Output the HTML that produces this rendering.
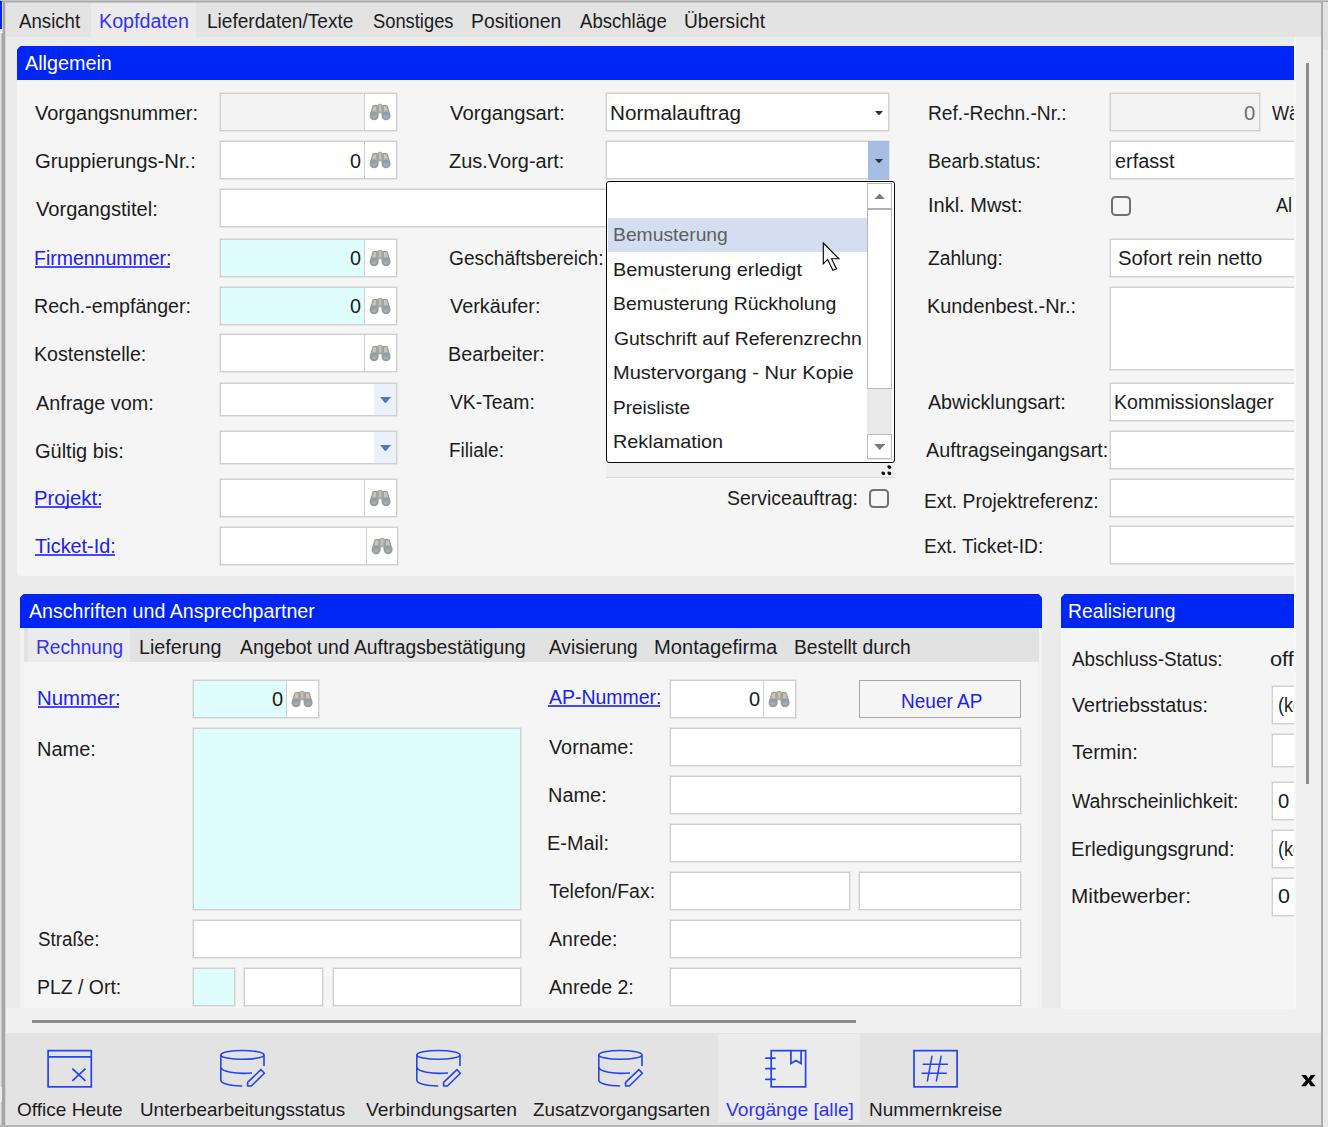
<!DOCTYPE html>
<html><head><meta charset="utf-8"><title>Vorgang</title>
<style>
html,body{margin:0;padding:0;overflow:hidden;}
body{width:1328px;height:1127px;overflow:hidden;position:relative;background:#ebebeb;font-family:"Liberation Sans",sans-serif;}
div,span,svg{position:absolute;box-sizing:border-box;}
span{white-space:pre;line-height:1;transform-origin:0 0;display:block;}
</style></head><body>
<div style="left:0px;top:0px;width:1328px;height:1127px;background:#ebebeb;"></div>
<div style="left:5px;top:2px;width:1316px;height:35px;background:#e3e3e3;"></div>
<div style="left:91px;top:2px;width:105px;height:35px;background:#ebebeb;"></div>
<div style="left:1294px;top:37px;width:2px;height:971px;background:#f8f8f8;"></div>
<div style="left:1296px;top:37px;width:25px;height:996px;background:#f0f0f0;"></div>
<div style="left:5px;top:1008px;width:1316px;height:25px;background:#f0f0f0;"></div>
<div style="left:5px;top:1033px;width:1316px;height:93px;background:#e3e3e3;"></div>
<div style="left:718px;top:1034px;width:142px;height:88px;background:#ebebeb;"></div>
<div style="left:1306px;top:63px;width:3px;height:721px;background:#8c8c8c;"></div>
<div style="left:32px;top:1020px;width:824px;height:3px;background:#8c8c8c;"></div>
<div style="left:17px;top:46px;width:1277px;height:35px;background:#0026f5;clip-path:polygon(3.5px 0,100% 0,100% 100%,0 100%,0 3.5px);"></div>
<div style="left:17px;top:80px;width:1277px;height:496px;background:#f5f5f5;border-radius:0 0 0 4px;"></div>
<div style="left:20px;top:594px;width:1022px;height:35px;background:#0026f5;clip-path:polygon(3.5px 0,calc(100% - 3.5px) 0,100% 3.5px,100% 100%,0 100%,0 3.5px);"></div>
<div style="left:20px;top:628px;width:1022px;height:380px;background:#f2f2f2;"></div>
<div style="left:24px;top:628px;width:1015px;height:35px;background:#e2e2e2;"></div>
<div style="left:28px;top:628px;width:102px;height:35px;background:#ebebeb;"></div>
<div style="left:24px;top:662px;width:1014px;height:346px;background:#f5f5f5;"></div>
<div style="left:1061px;top:594px;width:233px;height:35px;background:#0026f5;clip-path:polygon(3.5px 0,100% 0,100% 100%,0 100%,0 3.5px);"></div>
<div style="left:1061px;top:628px;width:233px;height:381px;background:#f5f5f5;"></div>
<div style="left:0px;top:0px;width:1328px;height:1px;background:#c4c4c4;"></div>
<div style="left:0px;top:1px;width:1328px;height:1px;background:#a9a9a9;"></div>
<div style="left:0px;top:2px;width:1328px;height:1px;background:#c9c9c9;"></div>
<div style="left:0px;top:2px;width:1px;height:1125px;background:#e2e2e2;"></div>
<div style="left:1px;top:2px;width:1px;height:1125px;background:#c4c4c4;"></div>
<div style="left:2px;top:2px;width:3px;height:1125px;background:#a7a7a7;"></div>
<div style="left:2px;top:2px;width:1px;height:31px;background:#d6d6d6;"></div>
<div style="left:5px;top:2px;width:1px;height:1125px;background:#d4d4d4;"></div>
<div style="left:0px;top:1087px;width:2px;height:15px;background:#ececec;"></div>
<div style="left:0px;top:1px;width:2px;height:28px;background:#0026f5;"></div>
<div style="left:0px;top:29px;width:2px;height:4px;background:#fbfbfb;"></div>
<div style="left:1321px;top:2px;width:2px;height:1125px;background:#ababab;"></div>
<div style="left:1323px;top:2px;width:5px;height:1125px;background:#e6e6e6;"></div>
<div style="left:0px;top:1125px;width:1323px;height:2px;background:#b4b4b4;"></div>
<span style="left:25.0px;top:54.0px;font-size:19.5px;color:#fff;transform:scaleX(1.0138);">Allgemein</span>
<span style="left:28.7px;top:602.0px;font-size:19.5px;color:#fff;transform:scaleX(1.0063);">Anschriften und Ansprechpartner</span>
<span style="left:1068.3px;top:602.0px;font-size:19.5px;color:#fff;transform:scaleX(0.9906);">Realisierung</span>
<span style="left:19.0px;top:12.0px;font-size:19.5px;color:#1c1c1c;transform:scaleX(0.9566);">Ansicht</span>
<span style="left:98.7px;top:12.0px;font-size:19.5px;color:#3232fa;transform:scaleX(1.0105);">Kopfdaten</span>
<span style="left:207.0px;top:12.0px;font-size:19.5px;color:#1c1c1c;transform:scaleX(0.9781);">Lieferdaten/Texte</span>
<span style="left:372.7px;top:12.0px;font-size:19.5px;color:#1c1c1c;transform:scaleX(0.9400);">Sonstiges</span>
<span style="left:471.0px;top:12.0px;font-size:19.5px;color:#1c1c1c;transform:scaleX(0.9916);">Positionen</span>
<span style="left:580.0px;top:12.0px;font-size:19.5px;color:#1c1c1c;transform:scaleX(0.9525);">Abschläge</span>
<span style="left:684.1px;top:12.0px;font-size:19.5px;color:#1c1c1c;transform:scaleX(0.9848);">Übersicht</span>
<div style="left:220px;top:93px;width:177px;height:38px;background:#fff;border:1px solid #d0d0d0;box-shadow:0 0 0 1px rgba(200,200,200,.32);"></div>
<div style="left:221px;top:94px;width:143px;height:36px;background:#f3f3f3;"></div>
<div style="left:364px;top:94px;width:1px;height:36px;background:#d0d0d0;"></div>
<svg style="left:369.1px;top:102.6px" width="22.2" height="18.35" viewBox="0 0 23 19">
<defs><linearGradient id="bl1" x1="0" y1="0" x2="0" y2="1"><stop offset="0" stop-color="#8799ab"/><stop offset="1" stop-color="#9fbdd6"/></linearGradient></defs>
<path d="M3.6 2.6 Q6.5 1.2 9.6 2.2 L10.2 12 L0.9 12 Z" fill="#a0a09b"/>
<path d="M19.4 2.6 Q16.5 1.2 13.4 2.2 L12.8 12 L22.1 12 Z" fill="#a0a09b"/>
<path d="M9 1.6 Q11.5 0 14 1.6 L13.8 10.6 L9.2 10.6 Z" fill="#acaca7"/>
<path d="M4.6 3.6 L7.4 3.2 L7.6 9.5 L3.2 9.5 Z" fill="#c4c4c0"/>
<path d="M18.4 3.6 L15.6 3.2 L15.4 9.5 L19.8 9.5 Z" fill="#c4c4c0"/>
<path d="M10.4 2.2 L12.6 2.2 L12.4 8.6 L10.6 8.6 Z" fill="#c2c2be"/>
<rect x="6.2" y="2.1" width="2.4" height="1.1" fill="#c08a55" opacity=".75"/>
<rect x="15.2" y="2.1" width="2.4" height="1.1" fill="#c08a55" opacity=".75"/>
<circle cx="5.3" cy="13.2" r="4.7" fill="#9d9d97"/>
<circle cx="17.7" cy="13.2" r="4.7" fill="#9d9d97"/>
<circle cx="5.4" cy="13.1" r="2.5" fill="url(#bl1)"/>
<circle cx="17.6" cy="13.1" r="2.5" fill="url(#bl1)"/>
</svg>
<div style="left:220px;top:141px;width:177px;height:38px;background:#fff;border:1px solid #d0d0d0;box-shadow:0 0 0 1px rgba(200,200,200,.32);"></div>
<div style="left:221px;top:142px;width:143px;height:36px;background:#fff;"></div>
<div style="left:364px;top:142px;width:1px;height:36px;background:#d0d0d0;"></div>
<svg style="left:369.1px;top:150.6px" width="22.2" height="18.35" viewBox="0 0 23 19">
<defs><linearGradient id="bl2" x1="0" y1="0" x2="0" y2="1"><stop offset="0" stop-color="#8799ab"/><stop offset="1" stop-color="#9fbdd6"/></linearGradient></defs>
<path d="M3.6 2.6 Q6.5 1.2 9.6 2.2 L10.2 12 L0.9 12 Z" fill="#a0a09b"/>
<path d="M19.4 2.6 Q16.5 1.2 13.4 2.2 L12.8 12 L22.1 12 Z" fill="#a0a09b"/>
<path d="M9 1.6 Q11.5 0 14 1.6 L13.8 10.6 L9.2 10.6 Z" fill="#acaca7"/>
<path d="M4.6 3.6 L7.4 3.2 L7.6 9.5 L3.2 9.5 Z" fill="#c4c4c0"/>
<path d="M18.4 3.6 L15.6 3.2 L15.4 9.5 L19.8 9.5 Z" fill="#c4c4c0"/>
<path d="M10.4 2.2 L12.6 2.2 L12.4 8.6 L10.6 8.6 Z" fill="#c2c2be"/>
<rect x="6.2" y="2.1" width="2.4" height="1.1" fill="#c08a55" opacity=".75"/>
<rect x="15.2" y="2.1" width="2.4" height="1.1" fill="#c08a55" opacity=".75"/>
<circle cx="5.3" cy="13.2" r="4.7" fill="#9d9d97"/>
<circle cx="17.7" cy="13.2" r="4.7" fill="#9d9d97"/>
<circle cx="5.4" cy="13.1" r="2.5" fill="url(#bl2)"/>
<circle cx="17.6" cy="13.1" r="2.5" fill="url(#bl2)"/>
</svg>
<div style="left:220px;top:189px;width:400px;height:38px;background:#fff;border:1px solid #d0d0d0;box-shadow:0 0 0 1px rgba(200,200,200,.32);"></div>
<div style="left:220px;top:239px;width:177px;height:38px;background:#fff;border:1px solid #d0d0d0;box-shadow:0 0 0 1px rgba(200,200,200,.32);"></div>
<div style="left:221px;top:240px;width:143px;height:36px;background:#e0fdfd;"></div>
<div style="left:364px;top:240px;width:1px;height:36px;background:#d0d0d0;"></div>
<svg style="left:369.1px;top:248.6px" width="22.2" height="18.35" viewBox="0 0 23 19">
<defs><linearGradient id="bl3" x1="0" y1="0" x2="0" y2="1"><stop offset="0" stop-color="#8799ab"/><stop offset="1" stop-color="#9fbdd6"/></linearGradient></defs>
<path d="M3.6 2.6 Q6.5 1.2 9.6 2.2 L10.2 12 L0.9 12 Z" fill="#a0a09b"/>
<path d="M19.4 2.6 Q16.5 1.2 13.4 2.2 L12.8 12 L22.1 12 Z" fill="#a0a09b"/>
<path d="M9 1.6 Q11.5 0 14 1.6 L13.8 10.6 L9.2 10.6 Z" fill="#acaca7"/>
<path d="M4.6 3.6 L7.4 3.2 L7.6 9.5 L3.2 9.5 Z" fill="#c4c4c0"/>
<path d="M18.4 3.6 L15.6 3.2 L15.4 9.5 L19.8 9.5 Z" fill="#c4c4c0"/>
<path d="M10.4 2.2 L12.6 2.2 L12.4 8.6 L10.6 8.6 Z" fill="#c2c2be"/>
<rect x="6.2" y="2.1" width="2.4" height="1.1" fill="#c08a55" opacity=".75"/>
<rect x="15.2" y="2.1" width="2.4" height="1.1" fill="#c08a55" opacity=".75"/>
<circle cx="5.3" cy="13.2" r="4.7" fill="#9d9d97"/>
<circle cx="17.7" cy="13.2" r="4.7" fill="#9d9d97"/>
<circle cx="5.4" cy="13.1" r="2.5" fill="url(#bl3)"/>
<circle cx="17.6" cy="13.1" r="2.5" fill="url(#bl3)"/>
</svg>
<div style="left:220px;top:287px;width:177px;height:38px;background:#fff;border:1px solid #d0d0d0;box-shadow:0 0 0 1px rgba(200,200,200,.32);"></div>
<div style="left:221px;top:288px;width:143px;height:36px;background:#e0fdfd;"></div>
<div style="left:364px;top:288px;width:1px;height:36px;background:#d0d0d0;"></div>
<svg style="left:369.1px;top:296.6px" width="22.2" height="18.35" viewBox="0 0 23 19">
<defs><linearGradient id="bl4" x1="0" y1="0" x2="0" y2="1"><stop offset="0" stop-color="#8799ab"/><stop offset="1" stop-color="#9fbdd6"/></linearGradient></defs>
<path d="M3.6 2.6 Q6.5 1.2 9.6 2.2 L10.2 12 L0.9 12 Z" fill="#a0a09b"/>
<path d="M19.4 2.6 Q16.5 1.2 13.4 2.2 L12.8 12 L22.1 12 Z" fill="#a0a09b"/>
<path d="M9 1.6 Q11.5 0 14 1.6 L13.8 10.6 L9.2 10.6 Z" fill="#acaca7"/>
<path d="M4.6 3.6 L7.4 3.2 L7.6 9.5 L3.2 9.5 Z" fill="#c4c4c0"/>
<path d="M18.4 3.6 L15.6 3.2 L15.4 9.5 L19.8 9.5 Z" fill="#c4c4c0"/>
<path d="M10.4 2.2 L12.6 2.2 L12.4 8.6 L10.6 8.6 Z" fill="#c2c2be"/>
<rect x="6.2" y="2.1" width="2.4" height="1.1" fill="#c08a55" opacity=".75"/>
<rect x="15.2" y="2.1" width="2.4" height="1.1" fill="#c08a55" opacity=".75"/>
<circle cx="5.3" cy="13.2" r="4.7" fill="#9d9d97"/>
<circle cx="17.7" cy="13.2" r="4.7" fill="#9d9d97"/>
<circle cx="5.4" cy="13.1" r="2.5" fill="url(#bl4)"/>
<circle cx="17.6" cy="13.1" r="2.5" fill="url(#bl4)"/>
</svg>
<div style="left:220px;top:334px;width:177px;height:38px;background:#fff;border:1px solid #d0d0d0;box-shadow:0 0 0 1px rgba(200,200,200,.32);"></div>
<div style="left:221px;top:335px;width:143px;height:36px;background:#fff;"></div>
<div style="left:364px;top:335px;width:1px;height:36px;background:#d0d0d0;"></div>
<svg style="left:369.1px;top:343.6px" width="22.2" height="18.35" viewBox="0 0 23 19">
<defs><linearGradient id="bl5" x1="0" y1="0" x2="0" y2="1"><stop offset="0" stop-color="#8799ab"/><stop offset="1" stop-color="#9fbdd6"/></linearGradient></defs>
<path d="M3.6 2.6 Q6.5 1.2 9.6 2.2 L10.2 12 L0.9 12 Z" fill="#a0a09b"/>
<path d="M19.4 2.6 Q16.5 1.2 13.4 2.2 L12.8 12 L22.1 12 Z" fill="#a0a09b"/>
<path d="M9 1.6 Q11.5 0 14 1.6 L13.8 10.6 L9.2 10.6 Z" fill="#acaca7"/>
<path d="M4.6 3.6 L7.4 3.2 L7.6 9.5 L3.2 9.5 Z" fill="#c4c4c0"/>
<path d="M18.4 3.6 L15.6 3.2 L15.4 9.5 L19.8 9.5 Z" fill="#c4c4c0"/>
<path d="M10.4 2.2 L12.6 2.2 L12.4 8.6 L10.6 8.6 Z" fill="#c2c2be"/>
<rect x="6.2" y="2.1" width="2.4" height="1.1" fill="#c08a55" opacity=".75"/>
<rect x="15.2" y="2.1" width="2.4" height="1.1" fill="#c08a55" opacity=".75"/>
<circle cx="5.3" cy="13.2" r="4.7" fill="#9d9d97"/>
<circle cx="17.7" cy="13.2" r="4.7" fill="#9d9d97"/>
<circle cx="5.4" cy="13.1" r="2.5" fill="url(#bl5)"/>
<circle cx="17.6" cy="13.1" r="2.5" fill="url(#bl5)"/>
</svg>
<div style="left:220px;top:383px;width:177px;height:33px;background:#fff;border:1px solid #d0d0d0;box-shadow:0 0 0 1px rgba(200,200,200,.32);"></div>
<div style="left:374px;top:384px;width:22px;height:31px;background:#eaf1fb;"></div>
<svg style="left:380.1px;top:396.9px" width="11" height="6.6" viewBox="0 0 11 6.6"><path d="M0 0 L11 0 L5.5 6.6 Z" fill="#4f7cb8"/></svg>
<div style="left:220px;top:431px;width:177px;height:33px;background:#fff;border:1px solid #d0d0d0;box-shadow:0 0 0 1px rgba(200,200,200,.32);"></div>
<div style="left:374px;top:432px;width:22px;height:31px;background:#eaf1fb;"></div>
<svg style="left:380.1px;top:444.9px" width="11" height="6.6" viewBox="0 0 11 6.6"><path d="M0 0 L11 0 L5.5 6.6 Z" fill="#4f7cb8"/></svg>
<div style="left:220px;top:479px;width:177px;height:38px;background:#fff;border:1px solid #d0d0d0;box-shadow:0 0 0 1px rgba(200,200,200,.32);"></div>
<div style="left:221px;top:480px;width:143px;height:36px;background:#fff;"></div>
<div style="left:364px;top:480px;width:1px;height:36px;background:#d0d0d0;"></div>
<svg style="left:369.1px;top:488.6px" width="22.2" height="18.35" viewBox="0 0 23 19">
<defs><linearGradient id="bl6" x1="0" y1="0" x2="0" y2="1"><stop offset="0" stop-color="#8799ab"/><stop offset="1" stop-color="#9fbdd6"/></linearGradient></defs>
<path d="M3.6 2.6 Q6.5 1.2 9.6 2.2 L10.2 12 L0.9 12 Z" fill="#a0a09b"/>
<path d="M19.4 2.6 Q16.5 1.2 13.4 2.2 L12.8 12 L22.1 12 Z" fill="#a0a09b"/>
<path d="M9 1.6 Q11.5 0 14 1.6 L13.8 10.6 L9.2 10.6 Z" fill="#acaca7"/>
<path d="M4.6 3.6 L7.4 3.2 L7.6 9.5 L3.2 9.5 Z" fill="#c4c4c0"/>
<path d="M18.4 3.6 L15.6 3.2 L15.4 9.5 L19.8 9.5 Z" fill="#c4c4c0"/>
<path d="M10.4 2.2 L12.6 2.2 L12.4 8.6 L10.6 8.6 Z" fill="#c2c2be"/>
<rect x="6.2" y="2.1" width="2.4" height="1.1" fill="#c08a55" opacity=".75"/>
<rect x="15.2" y="2.1" width="2.4" height="1.1" fill="#c08a55" opacity=".75"/>
<circle cx="5.3" cy="13.2" r="4.7" fill="#9d9d97"/>
<circle cx="17.7" cy="13.2" r="4.7" fill="#9d9d97"/>
<circle cx="5.4" cy="13.1" r="2.5" fill="url(#bl6)"/>
<circle cx="17.6" cy="13.1" r="2.5" fill="url(#bl6)"/>
</svg>
<div style="left:220px;top:527px;width:178px;height:38px;background:#fff;border:1px solid #d0d0d0;box-shadow:0 0 0 1px rgba(200,200,200,.32);"></div>
<div style="left:221px;top:528px;width:145px;height:36px;background:#fff;"></div>
<div style="left:366px;top:528px;width:1px;height:36px;background:#d0d0d0;"></div>
<svg style="left:370.6px;top:536.6px" width="22.2" height="18.35" viewBox="0 0 23 19">
<defs><linearGradient id="bl7" x1="0" y1="0" x2="0" y2="1"><stop offset="0" stop-color="#8799ab"/><stop offset="1" stop-color="#9fbdd6"/></linearGradient></defs>
<path d="M3.6 2.6 Q6.5 1.2 9.6 2.2 L10.2 12 L0.9 12 Z" fill="#a0a09b"/>
<path d="M19.4 2.6 Q16.5 1.2 13.4 2.2 L12.8 12 L22.1 12 Z" fill="#a0a09b"/>
<path d="M9 1.6 Q11.5 0 14 1.6 L13.8 10.6 L9.2 10.6 Z" fill="#acaca7"/>
<path d="M4.6 3.6 L7.4 3.2 L7.6 9.5 L3.2 9.5 Z" fill="#c4c4c0"/>
<path d="M18.4 3.6 L15.6 3.2 L15.4 9.5 L19.8 9.5 Z" fill="#c4c4c0"/>
<path d="M10.4 2.2 L12.6 2.2 L12.4 8.6 L10.6 8.6 Z" fill="#c2c2be"/>
<rect x="6.2" y="2.1" width="2.4" height="1.1" fill="#c08a55" opacity=".75"/>
<rect x="15.2" y="2.1" width="2.4" height="1.1" fill="#c08a55" opacity=".75"/>
<circle cx="5.3" cy="13.2" r="4.7" fill="#9d9d97"/>
<circle cx="17.7" cy="13.2" r="4.7" fill="#9d9d97"/>
<circle cx="5.4" cy="13.1" r="2.5" fill="url(#bl7)"/>
<circle cx="17.6" cy="13.1" r="2.5" fill="url(#bl7)"/>
</svg>
<span style="left:35.1px;top:104.0px;font-size:19.5px;color:#1c1c1c;transform:scaleX(1.0231);">Vorgangsnummer:</span>
<span style="left:34.8px;top:152.0px;font-size:19.5px;color:#1c1c1c;transform:scaleX(1.0375);">Gruppierungs-Nr.:</span>
<span style="left:35.7px;top:200.0px;font-size:19.5px;color:#1c1c1c;transform:scaleX(1.0308);">Vorgangstitel:</span>
<div style="left:35.4px;top:266px;width:135.0px;height:2px;background:#4a4afa;"></div>
<span style="left:34.2px;top:249.0px;font-size:19.5px;color:#2020f0;transform:scaleX(0.9988);">Firmennummer:</span>
<span style="left:34.2px;top:297.0px;font-size:19.5px;color:#1c1c1c;transform:scaleX(1.0060);">Rech.-empfänger:</span>
<span style="left:34.2px;top:345.0px;font-size:19.5px;color:#1c1c1c;transform:scaleX(1.0053);">Kostenstelle:</span>
<span style="left:35.8px;top:394.0px;font-size:19.5px;color:#1c1c1c;transform:scaleX(1.0151);">Anfrage vom:</span>
<span style="left:34.8px;top:442.0px;font-size:19.5px;color:#1c1c1c;transform:scaleX(1.0256);">Gültig bis:</span>
<div style="left:35.4px;top:506px;width:66.0px;height:2px;background:#4a4afa;"></div>
<span style="left:34.2px;top:489.0px;font-size:19.5px;color:#2020f0;transform:scaleX(1.0384);">Projekt:</span>
<div style="left:35.4px;top:554px;width:79.3px;height:2px;background:#4a4afa;"></div>
<span style="left:35.4px;top:537.0px;font-size:19.5px;color:#2020f0;transform:scaleX(1.0153);">Ticket-Id:</span>
<span style="left:349.7px;top:152.0px;font-size:19.5px;color:#1c1c1c;transform:scaleX(1.0150);">0</span>
<span style="left:349.7px;top:249.0px;font-size:19.5px;color:#1c1c1c;transform:scaleX(1.0150);">0</span>
<span style="left:349.7px;top:297.0px;font-size:19.5px;color:#1c1c1c;transform:scaleX(1.0150);">0</span>
<span style="left:449.9px;top:104.0px;font-size:19.5px;color:#1c1c1c;transform:scaleX(1.0385);">Vorgangsart:</span>
<span style="left:449.4px;top:152.0px;font-size:19.5px;color:#1c1c1c;transform:scaleX(1.0238);">Zus.Vorg-art:</span>
<span style="left:449.0px;top:249.0px;font-size:19.5px;color:#1c1c1c;transform:scaleX(0.9829);">Geschäftsbereich:</span>
<span style="left:449.9px;top:297.0px;font-size:19.5px;color:#1c1c1c;transform:scaleX(1.0176);">Verkäufer:</span>
<span style="left:448.4px;top:345.0px;font-size:19.5px;color:#1c1c1c;transform:scaleX(1.0148);">Bearbeiter:</span>
<span style="left:449.9px;top:393.0px;font-size:19.5px;color:#1c1c1c;transform:scaleX(0.9899);">VK-Team:</span>
<span style="left:448.5px;top:441.0px;font-size:19.5px;color:#1c1c1c;transform:scaleX(0.9747);">Filiale:</span>
<span style="left:726.7px;top:489.0px;font-size:19.5px;color:#1c1c1c;transform:scaleX(0.9984);">Serviceauftrag:</span>
<div style="left:869.3px;top:488.9px;width:20px;height:19px;background:#f6f6f6;border:2px solid #707070;border-radius:4.5px;"></div>
<div style="left:606px;top:93px;width:283px;height:38px;background:#fff;border:1px solid #d0d0d0;box-shadow:0 0 0 1px rgba(200,200,200,.32);"></div>
<span style="left:610.3px;top:104.0px;font-size:19.5px;color:#1c1c1c;transform:scaleX(1.0596);">Normalauftrag</span>
<svg style="left:875.0px;top:110.8px" width="8" height="4.5" viewBox="0 0 8 4.5"><path d="M0 0 L8 0 L4.0 4.5 Z" fill="#333"/></svg>
<div style="left:606px;top:141px;width:283px;height:38px;background:#fff;border:1px solid #d0d0d0;box-shadow:0 0 0 1px rgba(200,200,200,.32);"></div>
<div style="left:868px;top:141px;width:21px;height:39px;background:#a6bde6;"></div>
<svg style="left:875.0px;top:158.8px" width="8" height="4.5" viewBox="0 0 8 4.5"><path d="M0 0 L8 0 L4.0 4.5 Z" fill="#333"/></svg>
<span style="left:927.5px;top:104.0px;font-size:19.5px;color:#1c1c1c;transform:scaleX(0.9842);">Ref.-Rechn.-Nr.:</span>
<span style="left:927.5px;top:152.0px;font-size:19.5px;color:#1c1c1c;transform:scaleX(0.9817);">Bearb.status:</span>
<span style="left:928.2px;top:196.0px;font-size:19.5px;color:#1c1c1c;transform:scaleX(1.0256);">Inkl. Mwst:</span>
<span style="left:928.4px;top:249.0px;font-size:19.5px;color:#1c1c1c;transform:scaleX(0.9849);">Zahlung:</span>
<span style="left:927.4px;top:297.0px;font-size:19.5px;color:#1c1c1c;transform:scaleX(1.0186);">Kundenbest.-Nr.:</span>
<span style="left:928.4px;top:393.0px;font-size:19.5px;color:#1c1c1c;transform:scaleX(1.0086);">Abwicklungsart:</span>
<span style="left:925.8px;top:441.0px;font-size:19.5px;color:#1c1c1c;transform:scaleX(1.0127);">Auftragseingangsart:</span>
<span style="left:924.3px;top:492.0px;font-size:19.5px;color:#1c1c1c;transform:scaleX(0.9887);">Ext. Projektreferenz:</span>
<span style="left:924.3px;top:537.0px;font-size:19.5px;color:#1c1c1c;transform:scaleX(0.9824);">Ext. Ticket-ID:</span>
<div style="left:1110px;top:93px;width:150px;height:38px;background:#f3f3f3;border:1px solid #d0d0d0;box-shadow:0 0 0 1px rgba(200,200,200,.32);"></div>
<span style="left:1244.0px;top:104.0px;font-size:19.5px;color:#6e6e6e;transform:scaleX(1.0363);">0</span>
<div style="left:1110px;top:141px;width:200px;height:38px;background:#fff;border:1px solid #d0d0d0;box-shadow:0 0 0 1px rgba(200,200,200,.32);"></div>
<span style="left:1115.2px;top:152.0px;font-size:19.5px;color:#1c1c1c;transform:scaleX(1.0170);">erfasst</span>
<div style="left:1110.8px;top:196.4px;width:20px;height:19.4px;background:#f6f6f6;border:2px solid #707070;border-radius:4.5px;"></div>
<div style="left:1110px;top:239px;width:200px;height:38px;background:#fff;border:1px solid #d0d0d0;box-shadow:0 0 0 1px rgba(200,200,200,.32);"></div>
<span style="left:1118.1px;top:249.0px;font-size:19.5px;color:#1c1c1c;transform:scaleX(1.0402);">Sofort rein netto</span>
<div style="left:1110px;top:287px;width:200px;height:83px;background:#fff;border:1px solid #d0d0d0;box-shadow:0 0 0 1px rgba(200,200,200,.32);"></div>
<div style="left:1110px;top:383px;width:200px;height:38px;background:#fff;border:1px solid #d0d0d0;box-shadow:0 0 0 1px rgba(200,200,200,.32);"></div>
<span style="left:1114.4px;top:393.0px;font-size:19.5px;color:#1c1c1c;transform:scaleX(1.0021);">Kommissionslager</span>
<div style="left:1110px;top:431px;width:200px;height:38px;background:#fff;border:1px solid #d0d0d0;box-shadow:0 0 0 1px rgba(200,200,200,.32);"></div>
<div style="left:1110px;top:479px;width:200px;height:38px;background:#fff;border:1px solid #d0d0d0;box-shadow:0 0 0 1px rgba(200,200,200,.32);"></div>
<div style="left:1110px;top:526px;width:200px;height:38px;background:#fff;border:1px solid #d0d0d0;box-shadow:0 0 0 1px rgba(200,200,200,.32);"></div>
<span style="left:1272.1px;top:104.0px;font-size:19.5px;color:#1c1c1c;transform:scaleX(0.9300);">Wä</span>
<span style="left:1276.4px;top:196.0px;font-size:19.5px;color:#1c1c1c;transform:scaleX(0.9300);">Al</span>
<span style="left:35.5px;top:638.0px;font-size:19.5px;color:#3232fa;transform:scaleX(0.9804);">Rechnung</span>
<span style="left:138.8px;top:638.0px;font-size:19.5px;color:#1c1c1c;transform:scaleX(1.0129);">Lieferung</span>
<span style="left:240.4px;top:638.0px;font-size:19.5px;color:#1c1c1c;transform:scaleX(0.9908);">Angebot und Auftragsbestätigung</span>
<span style="left:548.5px;top:638.0px;font-size:19.5px;color:#1c1c1c;transform:scaleX(0.9776);">Avisierung</span>
<span style="left:653.8px;top:638.0px;font-size:19.5px;color:#1c1c1c;transform:scaleX(1.0333);">Montagefirma</span>
<span style="left:793.8px;top:638.0px;font-size:19.5px;color:#1c1c1c;transform:scaleX(0.9875);">Bestellt durch</span>
<div style="left:193px;top:680px;width:126px;height:38px;background:#fff;border:1px solid #d0d0d0;box-shadow:0 0 0 1px rgba(200,200,200,.32);"></div>
<div style="left:194px;top:681px;width:92px;height:36px;background:#e0fdfd;"></div>
<div style="left:286px;top:681px;width:1px;height:36px;background:#d0d0d0;"></div>
<svg style="left:291.1px;top:689.6px" width="22.2" height="18.35" viewBox="0 0 23 19">
<defs><linearGradient id="bl8" x1="0" y1="0" x2="0" y2="1"><stop offset="0" stop-color="#8799ab"/><stop offset="1" stop-color="#9fbdd6"/></linearGradient></defs>
<path d="M3.6 2.6 Q6.5 1.2 9.6 2.2 L10.2 12 L0.9 12 Z" fill="#a0a09b"/>
<path d="M19.4 2.6 Q16.5 1.2 13.4 2.2 L12.8 12 L22.1 12 Z" fill="#a0a09b"/>
<path d="M9 1.6 Q11.5 0 14 1.6 L13.8 10.6 L9.2 10.6 Z" fill="#acaca7"/>
<path d="M4.6 3.6 L7.4 3.2 L7.6 9.5 L3.2 9.5 Z" fill="#c4c4c0"/>
<path d="M18.4 3.6 L15.6 3.2 L15.4 9.5 L19.8 9.5 Z" fill="#c4c4c0"/>
<path d="M10.4 2.2 L12.6 2.2 L12.4 8.6 L10.6 8.6 Z" fill="#c2c2be"/>
<rect x="6.2" y="2.1" width="2.4" height="1.1" fill="#c08a55" opacity=".75"/>
<rect x="15.2" y="2.1" width="2.4" height="1.1" fill="#c08a55" opacity=".75"/>
<circle cx="5.3" cy="13.2" r="4.7" fill="#9d9d97"/>
<circle cx="17.7" cy="13.2" r="4.7" fill="#9d9d97"/>
<circle cx="5.4" cy="13.1" r="2.5" fill="url(#bl8)"/>
<circle cx="17.6" cy="13.1" r="2.5" fill="url(#bl8)"/>
</svg>
<span style="left:272.0px;top:690.0px;font-size:19.5px;color:#1c1c1c;transform:scaleX(1.0256);">0</span>
<div style="left:193px;top:728px;width:328px;height:182px;background:#e0fdfd;border:1px solid #d0d0d0;box-shadow:0 0 0 1px rgba(200,200,200,.32);"></div>
<div style="left:193px;top:920px;width:328px;height:38px;background:#fff;border:1px solid #d0d0d0;box-shadow:0 0 0 1px rgba(200,200,200,.32);"></div>
<div style="left:193px;top:968px;width:42px;height:38px;background:#e0fdfd;border:1px solid #d0d0d0;box-shadow:0 0 0 1px rgba(200,200,200,.32);"></div>
<div style="left:244px;top:968px;width:79px;height:38px;background:#fff;border:1px solid #d0d0d0;box-shadow:0 0 0 1px rgba(200,200,200,.32);"></div>
<div style="left:333px;top:968px;width:188px;height:38px;background:#fff;border:1px solid #d0d0d0;box-shadow:0 0 0 1px rgba(200,200,200,.32);"></div>
<div style="left:38.2px;top:706px;width:81.2px;height:2px;background:#4a4afa;"></div>
<span style="left:37.0px;top:689.0px;font-size:19.5px;color:#2020f0;transform:scaleX(1.0451);">Nummer:</span>
<span style="left:37.4px;top:740.0px;font-size:19.5px;color:#1c1c1c;transform:scaleX(1.0256);">Name:</span>
<span style="left:37.8px;top:930.0px;font-size:19.5px;color:#1c1c1c;transform:scaleX(0.9620);">Straße:</span>
<span style="left:37.4px;top:978.0px;font-size:19.5px;color:#1c1c1c;transform:scaleX(0.9961);">PLZ / Ort:</span>
<div style="left:670px;top:680px;width:126px;height:38px;background:#fff;border:1px solid #d0d0d0;box-shadow:0 0 0 1px rgba(200,200,200,.32);"></div>
<div style="left:671px;top:681px;width:92px;height:36px;background:#fff;"></div>
<div style="left:763px;top:681px;width:1px;height:36px;background:#d0d0d0;"></div>
<svg style="left:768.1px;top:689.6px" width="22.2" height="18.35" viewBox="0 0 23 19">
<defs><linearGradient id="bl9" x1="0" y1="0" x2="0" y2="1"><stop offset="0" stop-color="#8799ab"/><stop offset="1" stop-color="#9fbdd6"/></linearGradient></defs>
<path d="M3.6 2.6 Q6.5 1.2 9.6 2.2 L10.2 12 L0.9 12 Z" fill="#a0a09b"/>
<path d="M19.4 2.6 Q16.5 1.2 13.4 2.2 L12.8 12 L22.1 12 Z" fill="#a0a09b"/>
<path d="M9 1.6 Q11.5 0 14 1.6 L13.8 10.6 L9.2 10.6 Z" fill="#acaca7"/>
<path d="M4.6 3.6 L7.4 3.2 L7.6 9.5 L3.2 9.5 Z" fill="#c4c4c0"/>
<path d="M18.4 3.6 L15.6 3.2 L15.4 9.5 L19.8 9.5 Z" fill="#c4c4c0"/>
<path d="M10.4 2.2 L12.6 2.2 L12.4 8.6 L10.6 8.6 Z" fill="#c2c2be"/>
<rect x="6.2" y="2.1" width="2.4" height="1.1" fill="#c08a55" opacity=".75"/>
<rect x="15.2" y="2.1" width="2.4" height="1.1" fill="#c08a55" opacity=".75"/>
<circle cx="5.3" cy="13.2" r="4.7" fill="#9d9d97"/>
<circle cx="17.7" cy="13.2" r="4.7" fill="#9d9d97"/>
<circle cx="5.4" cy="13.1" r="2.5" fill="url(#bl9)"/>
<circle cx="17.6" cy="13.1" r="2.5" fill="url(#bl9)"/>
</svg>
<span style="left:749.0px;top:690.0px;font-size:19.5px;color:#1c1c1c;transform:scaleX(1.0256);">0</span>
<div style="left:859px;top:680px;width:162px;height:38px;background:#f5f5f5;border:1px solid #a6a6a6;"></div>
<span style="left:900.6px;top:692.0px;font-size:19.5px;color:#2020f0;transform:scaleX(0.9750);">Neuer AP</span>
<div style="left:670px;top:728px;width:351px;height:38px;background:#fff;border:1px solid #d0d0d0;box-shadow:0 0 0 1px rgba(200,200,200,.32);"></div>
<div style="left:670px;top:776px;width:351px;height:38px;background:#fff;border:1px solid #d0d0d0;box-shadow:0 0 0 1px rgba(200,200,200,.32);"></div>
<div style="left:670px;top:824px;width:351px;height:38px;background:#fff;border:1px solid #d0d0d0;box-shadow:0 0 0 1px rgba(200,200,200,.32);"></div>
<div style="left:670px;top:872px;width:180px;height:38px;background:#fff;border:1px solid #d0d0d0;box-shadow:0 0 0 1px rgba(200,200,200,.32);"></div>
<div style="left:859px;top:872px;width:162px;height:38px;background:#fff;border:1px solid #d0d0d0;box-shadow:0 0 0 1px rgba(200,200,200,.32);"></div>
<div style="left:670px;top:920px;width:351px;height:38px;background:#fff;border:1px solid #d0d0d0;box-shadow:0 0 0 1px rgba(200,200,200,.32);"></div>
<div style="left:670px;top:968px;width:351px;height:38px;background:#fff;border:1px solid #d0d0d0;box-shadow:0 0 0 1px rgba(200,200,200,.32);"></div>
<div style="left:548.3px;top:705px;width:111.5px;height:2px;background:#4a4afa;"></div>
<span style="left:548.7px;top:688.0px;font-size:19.5px;color:#2020f0;transform:scaleX(0.9977);">AP-Nummer:</span>
<span style="left:548.6px;top:738.0px;font-size:19.5px;color:#1c1c1c;transform:scaleX(1.0158);">Vorname:</span>
<span style="left:547.6px;top:786.0px;font-size:19.5px;color:#1c1c1c;transform:scaleX(1.0220);">Name:</span>
<span style="left:547.4px;top:834.0px;font-size:19.5px;color:#1c1c1c;transform:scaleX(1.0204);">E-Mail:</span>
<span style="left:548.6px;top:882.0px;font-size:19.5px;color:#1c1c1c;transform:scaleX(0.9988);">Telefon/Fax:</span>
<span style="left:548.5px;top:930.0px;font-size:19.5px;color:#1c1c1c;transform:scaleX(1.0016);">Anrede:</span>
<span style="left:548.5px;top:978.0px;font-size:19.5px;color:#1c1c1c;transform:scaleX(1.0027);">Anrede 2:</span>
<span style="left:1072.3px;top:650.0px;font-size:19.5px;color:#1c1c1c;transform:scaleX(0.9647);">Abschluss-Status:</span>
<span style="left:1072.2px;top:696.0px;font-size:19.5px;color:#1c1c1c;transform:scaleX(1.0113);">Vertriebsstatus:</span>
<span style="left:1071.9px;top:743.0px;font-size:19.5px;color:#1c1c1c;transform:scaleX(1.0289);">Termin:</span>
<span style="left:1072.2px;top:792.0px;font-size:19.5px;color:#1c1c1c;transform:scaleX(0.9942);">Wahrscheinlichkeit:</span>
<span style="left:1070.7px;top:840.0px;font-size:19.5px;color:#1c1c1c;transform:scaleX(1.0340);">Erledigungsgrund:</span>
<span style="left:1070.6px;top:887.0px;font-size:19.5px;color:#1c1c1c;transform:scaleX(1.0640);">Mitbewerber:</span>
<span style="left:1269.7px;top:650.0px;font-size:19.5px;color:#1c1c1c;transform:scaleX(1.1180);">off</span>
<div style="left:1272px;top:686px;width:50px;height:38px;background:#fff;border:1px solid #d0d0d0;box-shadow:0 0 0 1px rgba(200,200,200,.32);"></div>
<span style="left:1277.6px;top:696.0px;font-size:19.5px;color:#1c1c1c;transform:scaleX(0.9300);">(kein)</span>
<div style="left:1272px;top:734px;width:50px;height:33px;background:#fff;border:1px solid #d0d0d0;box-shadow:0 0 0 1px rgba(200,200,200,.32);"></div>
<div style="left:1272px;top:782px;width:50px;height:38px;background:#fff;border:1px solid #d0d0d0;box-shadow:0 0 0 1px rgba(200,200,200,.32);"></div>
<span style="left:1277.5px;top:792.0px;font-size:19.5px;color:#1c1c1c;transform:scaleX(1.0363);">0</span>
<div style="left:1272px;top:830px;width:50px;height:38px;background:#fff;border:1px solid #d0d0d0;box-shadow:0 0 0 1px rgba(200,200,200,.32);"></div>
<span style="left:1277.6px;top:840.0px;font-size:19.5px;color:#1c1c1c;transform:scaleX(0.9300);">(kein)</span>
<div style="left:1272px;top:878px;width:50px;height:38px;background:#fff;border:1px solid #d0d0d0;box-shadow:0 0 0 1px rgba(200,200,200,.32);"></div>
<span style="left:1277.8px;top:887.0px;font-size:19.5px;color:#1c1c1c;transform:scaleX(1.1004);">0</span>
<div style="left:1294px;top:37px;width:2px;height:971px;background:#f8f8f8;"></div>
<div style="left:1296px;top:37px;width:25px;height:996px;background:#f0f0f0;"></div>
<div style="left:1306px;top:63px;width:3px;height:721px;background:#8c8c8c;"></div>
<div style="left:1321px;top:2px;width:2px;height:1125px;background:#ababab;"></div>
<div style="left:1323px;top:2px;width:5px;height:1125px;background:#eaeaea;"></div>
<div style="left:1323px;top:2px;width:5px;height:48px;background:#e2e2e2;"></div>
<div style="left:606px;top:460px;width:289px;height:18px;background:#efefef;"></div>
<div style="left:606px;top:477px;width:289px;height:1px;background:#dadada;"></div>
<svg style="left:880px;top:463px" width="14" height="14" viewBox="0 0 14 14"><g fill="#101010"><circle cx="9.6" cy="4.3" r="1.7"/><circle cx="3.5" cy="10.5" r="1.7"/><circle cx="9.6" cy="10.5" r="1.7"/><circle cx="8.6" cy="3.5" r="1.2"/><circle cx="2.6" cy="9.7" r="1.2"/><circle cx="8.6" cy="9.7" r="1.2"/></g></svg>
<div style="left:605.5px;top:180.5px;width:289.5px;height:282px;background:#fff;border:1.5px solid #0a0a0a;border-radius:3px;"></div>
<div style="left:608px;top:218px;width:259px;height:34px;background:#d5def1;"></div>
<div style="left:867px;top:183px;width:25px;height:277px;background:#e9e9e9;"></div>
<div style="left:867px;top:183px;width:25px;height:26px;background:#fff;border:1px solid #b8b8b8;border-bottom:none;"></div>
<div style="left:867px;top:207.5px;width:25px;height:181.5px;background:#fff;border:1px solid #b8b8b8;border-top:2px solid #b0b0b0;"></div>
<div style="left:867px;top:434px;width:25px;height:25px;background:#fff;border:1px solid #bdbdbd;"></div>
<svg style="left:873.6px;top:193.2px" width="11.2" height="6.2" viewBox="0 0 12 7"><path d="M0 7 L6 0.5 L12 7 Z" fill="#7a7a7a"/></svg>
<svg style="left:873.5px;top:444.2px" width="11.4" height="6.4" viewBox="0 0 12 7"><path d="M0 0 L6 6.5 L12 0 Z" fill="#7a7a7a"/></svg>
<span style="left:613.3px;top:226.0px;font-size:18.5px;color:#5e5e5e;transform:scaleX(1.0438);">Bemusterung</span>
<span style="left:613.2px;top:261.0px;font-size:18.5px;color:#1c1c1c;transform:scaleX(1.0742);">Bemusterung erledigt</span>
<span style="left:613.2px;top:295.0px;font-size:18.5px;color:#1c1c1c;transform:scaleX(1.0487);">Bemusterung Rückholung</span>
<span style="left:613.8px;top:330.0px;font-size:18.5px;color:#1c1c1c;transform:scaleX(1.0478);">Gutschrift auf Referenzrechn</span>
<span style="left:613.2px;top:364.0px;font-size:18.5px;color:#1c1c1c;transform:scaleX(1.0834);">Mustervorgang - Nur Kopie</span>
<span style="left:613.3px;top:399.0px;font-size:18.5px;color:#1c1c1c;transform:scaleX(1.0261);">Preisliste</span>
<span style="left:613.2px;top:433.0px;font-size:18.5px;color:#1c1c1c;transform:scaleX(1.0711);">Reklamation</span>
<svg style="left:822px;top:241px" width="20" height="32" viewBox="0 0 20 32"><path d="M1.3 2 L1.3 22.8 L5.6 18.4 L10.9 29.2 L14.5 28 L9.6 17.7 L16.9 17.7 Z" fill="#f6f7f7" stroke="#050505" stroke-width="1.15" stroke-linejoin="miter"/></svg>
<svg style="left:47px;top:1049px" width="46" height="40" viewBox="0 0 46 40"><g fill="none" stroke="#2443f5" stroke-width="1.7"><rect x="1.1" y="1.65" width="43.2" height="36.2"/><path d="M1.1 7.8 H44.3"/><path d="M25.3 19.6 L38.5 31.8 M38.5 19.6 L25.3 31.8"/></g></svg>
<svg style="left:219px;top:1049px" width="48" height="40" viewBox="0 0 48 40"><g fill="none" stroke="#2443f5" stroke-width="1.6" stroke-linejoin="round"><ellipse cx="23.4" cy="5.9" rx="21.6" ry="4.4"/><path d="M1.8 5.9 V31 C1.8 34.6 11 37 23.2 37"/><path d="M45 5.9 V17"/><path d="M1.8 18.5 C3 22.5 16 25.4 33 24"/><path d="M41.9 20.6 L45.4 24.2 L32.4 37 L28.6 37 L28.6 33.4 Z"/></g></svg>
<svg style="left:415px;top:1049px" width="48" height="40" viewBox="0 0 48 40"><g fill="none" stroke="#2443f5" stroke-width="1.6" stroke-linejoin="round"><ellipse cx="23.4" cy="5.9" rx="21.6" ry="4.4"/><path d="M1.8 5.9 V31 C1.8 34.6 11 37 23.2 37"/><path d="M45 5.9 V17"/><path d="M1.8 18.5 C3 22.5 16 25.4 33 24"/><path d="M41.9 20.6 L45.4 24.2 L32.4 37 L28.6 37 L28.6 33.4 Z"/></g></svg>
<svg style="left:597px;top:1049px" width="48" height="40" viewBox="0 0 48 40"><g fill="none" stroke="#2443f5" stroke-width="1.6" stroke-linejoin="round"><ellipse cx="23.4" cy="5.9" rx="21.6" ry="4.4"/><path d="M1.8 5.9 V31 C1.8 34.6 11 37 23.2 37"/><path d="M45 5.9 V17"/><path d="M1.8 18.5 C3 22.5 16 25.4 33 24"/><path d="M41.9 20.6 L45.4 24.2 L32.4 37 L28.6 37 L28.6 33.4 Z"/></g></svg>
<svg style="left:765px;top:1049px" width="44" height="40" viewBox="0 0 44 40"><g fill="none" stroke="#2443f5" stroke-width="1.7"><rect x="6.2" y="1.65" width="34.4" height="36.2"/><path d="M0.8 9.2 H10 M0.8 19.7 H10 M0.8 30.3 H10" stroke-linecap="round"/><path d="M25.9 1.6 V14.6 L31 11.6 L36.1 14.6 V1.6"/></g></svg>
<svg style="left:912px;top:1049px" width="48" height="40" viewBox="0 0 48 40"><g fill="none" stroke="#2443f5" stroke-width="1.7"><rect x="2" y="1.65" width="43.1" height="36.2"/><path d="M19.9 7.3 L15.4 31.9 M29.1 7.3 L24.4 31.9 M11.2 15.2 H35.4 M10 24.2 H34.3" stroke-width="1.5" stroke-linecap="round"/></g></svg>
<span style="left:16.8px;top:1101.0px;font-size:18.5px;color:#1c1c1c;transform:scaleX(1.0296);">Office Heute</span>
<span style="left:139.6px;top:1101.0px;font-size:18.5px;color:#1c1c1c;transform:scaleX(1.0174);">Unterbearbeitungsstatus</span>
<span style="left:365.7px;top:1101.0px;font-size:18.5px;color:#1c1c1c;transform:scaleX(1.0414);">Verbindungsarten</span>
<span style="left:533.1px;top:1101.0px;font-size:18.5px;color:#1c1c1c;transform:scaleX(1.0189);">Zusatzvorgangsarten</span>
<span style="left:725.7px;top:1101.0px;font-size:18.5px;color:#3232fa;transform:scaleX(1.0360);">Vorgänge [alle]</span>
<span style="left:869.3px;top:1101.0px;font-size:18.5px;color:#1c1c1c;transform:scaleX(1.0211);">Nummernkreise</span>
<svg style="left:1301px;top:1075px" width="15" height="12" viewBox="0 0 15 12"><path d="M0.2 0 L5 0 L7.4 3.5 L9.8 0 L14.6 0 L9.9 5.6 L14.7 11.3 L9.9 11.3 L7.4 7.8 L4.9 11.3 L0.1 11.3 L4.9 5.6 Z" fill="#050505"/></svg>
</body></html>
